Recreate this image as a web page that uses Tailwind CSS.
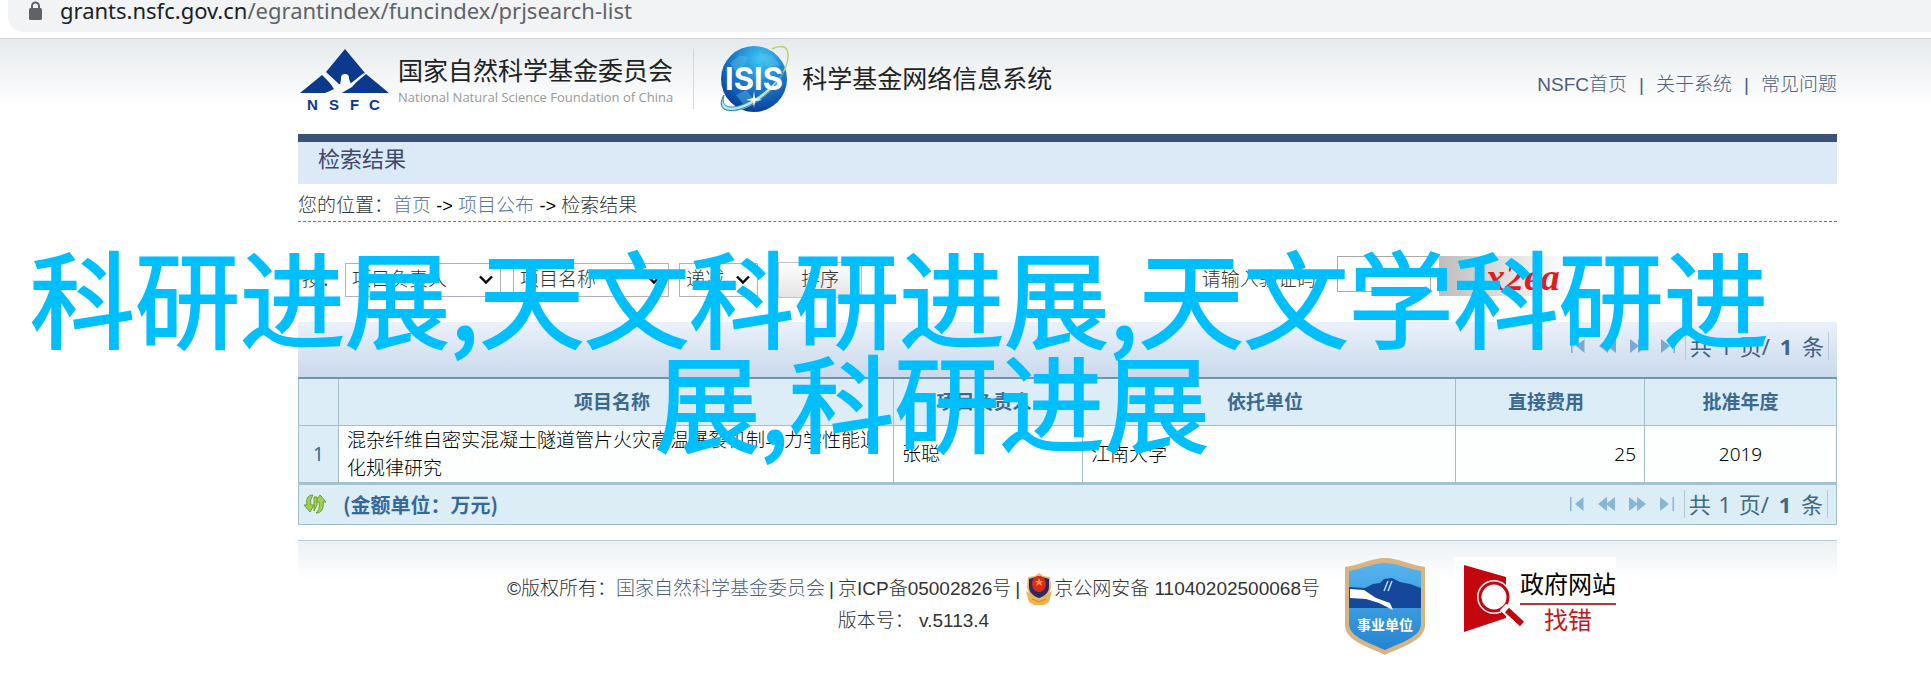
<!DOCTYPE html>
<html lang="zh-CN">
<head>
    <meta charset="UTF-8"/>
    <meta name="viewport" content="width=device-width, initial-scale=1"/>
    <title>检索结果 - 科学基金网络信息系统</title>
    <script src="https://cdn.jsdelivr.net/npm/@tailwindcss/browser@4"></script>
</head>
<body class="relative overflow-x-hidden bg-white text-[19px] leading-7 font-light text-[#333] font-['Liberation_Sans','Noto_Sans_CJK_SC',sans-serif]">
    <!-- address bar -->
    <div class="pl-2 h-[39px] bg-white border-b border-[#d3d6d9]">
        <div class="flex items-start h-8 rounded-bl-2xl bg-[#f1f3f4] pl-5">
            <svg class="w-4 h-5 mt-px" viewBox="0 0 16 20" fill="none">
                <rect x="1" y="7" width="13" height="12" rx="1.5" fill="#5f6368"/>
                <path d="M4 8V5a3.5 3.5 0 0 1 7 0v3" stroke="#5f6368" stroke-width="2"/>
            </svg>
            <div class="pl-4 text-[22px] leading-5 font-normal text-[#5f6368] font-['Noto_Sans','Open_Sans',sans-serif]"><span class="text-[#202124]">grants.nsfc.gov.cn</span>/egrantindex/funcindex/prjsearch-list</div>
        </div>
    </div>

    <div class="bg-linear-to-b from-[#e6eaed] to-white to-[68px] pl-[298px] pr-[94px]">
        <header class="flex items-center h-[95px] pb-4">
            <svg class="w-[92px] h-[66px]" viewBox="0 0 92 66">
                <path d="M47 3L67 27L61 32L53 38L51 33L47 31L43 33L42 39L28 26Z" fill="#0b3a8c"/>
                <path d="M24 29L36 41L38 43L27 47H2Z" fill="#0b3a8c"/>
                <path d="M68 28L91 47H42L55 39Z" fill="#0b3a8c"/>
                <path d="M26 28L38 38L43 38L47 34L52 38L67 26L54 41L42 48H26L36 43Z" fill="#fff"/>
                <circle cx="47" cy="32" r="4" fill="#fff"/>
                <text x="9" y="64" class="font-['Liberation_Sans',sans-serif] font-bold text-[15px]" fill="#0b3a8c">N</text>
                <text x="31" y="64" class="font-['Liberation_Sans',sans-serif] font-bold text-[15px]" fill="#0b3a8c">S</text>
                <text x="52" y="64" class="font-['Liberation_Sans',sans-serif] font-bold text-[15px]" fill="#0b3a8c">F</text>
                <text x="71" y="64" class="font-['Liberation_Sans',sans-serif] font-bold text-[15px]" fill="#0b3a8c">C</text>
            </svg>
            <div class="pl-2 pt-1">
                <div class="text-[25px] leading-8 font-normal text-[#222]">国家自然科学基金委员会</div>
                <div class="text-[13px] leading-5 font-normal text-[#999] font-['Open_Sans',sans-serif]">National Natural Science Foundation of China</div>
            </div>
            <div class="w-px h-15 ml-5 bg-[#d5d9de]"></div>
            <svg class="w-[76px] h-[76px] ml-6" viewBox="0 0 76 76">
                <defs>
                    <radialGradient id="globe" cx="60%" cy="20%" r="80%">
                        <stop offset="0" stop-color="#3fc8f4"/>
                        <stop offset="0.5" stop-color="#1b7fcf"/>
                        <stop offset="1" stop-color="#0a3f9c"/>
                    </radialGradient>
                </defs>
                <circle cx="36" cy="38" r="33" fill="url(#globe)"/>
                <path d="M12 22l10-8 8 2-3 8-10 6zM40 12l14 2 8 10-12 2zM18 54l10-5 7 8-9 7z" fill="#5fc6ee" opacity=".4"/>
                <path d="M6 54C-4 72 16 74 36 62C58 49 74 23 69 9C67 4 59 5 54 8" fill="none" stroke="#b5d36b" stroke-width="1.5"/>
                <path d="M6 54C-4 72 16 74 36 62C50 54 60 42 65 31C54 46 40 57 26 63C12 69 2 66 6 54Z" fill="#b9e4f4" stroke="#2683bd" stroke-width="1"/>
                <text x="36" y="49" text-anchor="middle" class="font-['Inter','Liberation_Sans',sans-serif] font-bold text-[31px]" fill="#fff">ISIS</text>
                <path d="M36 50l1 7 7 2-7 1-1 7-1-7-7-1 7-2z" fill="#fff"/>
            </svg>
            <div class="pl-2 text-[25px] font-normal text-[#222]">科学基金网络信息系统</div>
            <nav class="ml-auto flex gap-3 pt-3 text-[#4c5c82]">
                <a href="#">NSFC首页</a><span>|</span><a href="#">关于系统</a><span>|</span><a href="#">常见问题</a>
            </nav>
        </header>

        <h1 class="h-[50px] border-t-8 border-[#3a5178] bg-[#dce9f6] pl-5 pt-1 text-[22px] font-normal text-[#3c4a6b]">检索结果</h1>
        <div class="h-[38px] pt-2 border-b border-dashed border-[#777]">您的位置：<a href="#" class="text-[#5573a8]">首页</a> <span class="text-lg font-normal text-black">-&gt;</span> <a href="#" class="text-[#5573a8]">项目公布</a> <span class="text-lg font-normal text-black">-&gt;</span> 检索结果</div>

        <form class="flex items-center h-[100px] pt-4">
            <label for="sort1" class="w-[47px] pl-1">按：</label>
            <div class="relative w-[156px] mr-3">
                <select id="sort1" class="block appearance-none w-full h-[34px] border border-[#b5b0bd] bg-white pl-1.5"><option>项目负责人</option></select>
                <svg class="absolute right-2 top-3 w-3.5 h-2.5 pointer-events-none" viewBox="0 0 14 10" fill="none" stroke="#000" stroke-width="2.4"><path d="M1 1.5l6 6 6-6"/></svg>
            </div>
            <div class="relative w-[156px] mr-2.5">
                <select aria-label="排序字段" class="block appearance-none w-full h-[34px] border border-[#b5b0bd] bg-white pl-1.5"><option>项目名称</option></select>
                <svg class="absolute right-2 top-3 w-3.5 h-2.5 pointer-events-none" viewBox="0 0 14 10" fill="none" stroke="#000" stroke-width="2.4"><path d="M1 1.5l6 6 6-6"/></svg>
            </div>
            <div class="relative w-[79px] mr-5">
                <select aria-label="排序方式" class="block appearance-none w-full h-[34px] border border-[#b5b0bd] bg-white pl-1.5"><option>递减</option></select>
                <svg class="absolute right-2 top-3 w-3.5 h-2.5 pointer-events-none" viewBox="0 0 14 10" fill="none" stroke="#000" stroke-width="2.4"><path d="M1 1.5l6 6 6-6"/></svg>
            </div>
            <button type="button" class="w-[84px] h-9 border border-[#c0c0c0] bg-linear-to-b from-white to-[#e4e4e4]">排序</button>
            <label for="code" class="ml-auto">请输入验证码:</label>
            <input id="code" type="text" class="w-[94px] h-9 ml-4 mb-3 border border-[#aaa] bg-white"/>
            <svg class="w-[130px] h-10 ml-2 mb-2 mr-[268px] overflow-visible" viewBox="0 0 130 40">
                <defs><linearGradient id="captcha"><stop offset="0" stop-color="#bdbdbd"/><stop offset="1" stop-color="#fff"/></linearGradient></defs>
                <rect width="130" height="40" fill="url(#captcha)"/>
                <text x="47" y="34" fill="#e01b22" class="font-['Liberation_Serif',serif] italic font-bold text-[38px]">x2ea</text>
            </svg>
        </form>

        <div class="flex items-center justify-end h-[55px] bg-linear-to-b from-[#ebf1fb] to-[#c9d9ec] pr-2 pb-2">
            <div class="flex items-center gap-3.5 text-[#7ba9d2]">
                <svg class="w-3.5 h-3.5" viewBox="0 0 14 14" fill="currentColor"><path d="M0 0h1.500v14H0zM13.500 0v14L5 7z"/></svg>
                <svg class="w-[17px] h-3.5" viewBox="0 0 17 14" fill="currentColor"><path d="M9 0v14L0 7zM17 0v14L8 7z"/></svg>
                <svg class="w-[17px] h-3.5" viewBox="0 0 17 14" fill="currentColor"><path d="M0 0v14l9-7zM8 0v14l9-7z"/></svg>
                <svg class="w-3.5 h-3.5" viewBox="0 0 14 14" fill="currentColor"><path d="M12.500 0H14v14h-1.500zM0 0v14l9-7z"/></svg>
            </div>
            <div class="ml-2.5 px-1 border-x border-[#b9c8dc] text-[22px] font-normal whitespace-pre text-[#3f6385] font-['Noto_Sans','Noto_Sans_CJK_SC',sans-serif]">共 <span class="px-0.5">1</span> 页/ <b class="px-1 font-bold">1</b> 条</div>
        </div>

        <table class="w-full table-fixed border-collapse border border-[#a3bdcb] text-black font-['Noto_Sans','Noto_Sans_CJK_SC',sans-serif]">
            <colgroup>
                <col class="w-10"/><col/><col class="w-[189px]"/><col class="w-[373px]"/><col class="w-[189px]"/><col class="w-[192px]"/>
            </colgroup>
            <thead>
                <tr class="h-[47px] border-t-2 border-t-[#7395ac] bg-[#dcedf7] text-[#3a6a92]">
                    <th class="border-r border-[#a3bdcb]"></th>
                    <th class="border-r border-[#a3bdcb] pr-2">项目名称</th>
                    <th class="border-r border-[#a3bdcb] pr-2">项目负责人</th>
                    <th class="border-r border-[#a3bdcb] pr-2">依托单位</th>
                    <th class="border-r border-[#a3bdcb] pr-2">直接费用</th>
                    <th>批准年度</th>
                </tr>
            </thead>
            <tbody>
                <tr class="h-14 border-t border-[#a3bdcb] bg-[#fcfffe]">
                    <td class="border-r border-[#a3bdcb] bg-[#dcedf7] text-center text-[#3a6a92] font-normal">1</td>
                    <td class="border-r border-[#a3bdcb] pl-2">混杂纤维自密实混凝土隧道管片火灾高温爆裂机制与力学性能退化规律研究</td>
                    <td class="border-r border-[#a3bdcb] pl-2">张聪</td>
                    <td class="border-r border-[#a3bdcb] pl-2">江南大学</td>
                    <td class="border-r border-[#a3bdcb] pr-2 text-right">25</td>
                    <td class="text-center">2019</td>
                </tr>
            </tbody>
        </table>
        <div class="flex items-center h-[42px] border border-t-2 border-[#a3bdcb] border-t-[#9fc6ce] bg-[#dcedf5] pl-1 pr-2">
            <svg class="w-6 h-5" viewBox="0 0 24 20" fill="#a5cf4f" stroke="#6d9a3a" stroke-width="1">
                <path d="M10 1C4 1 3 6 4 11H1l6 7 4-7H8c-1-4 0-7 2-10z"/>
                <path d="M13 19c6 0 8-5 7-11h3l-6-7-5 7h4c1 5 0 8-3 11z"/>
                <path d="M11 3h3v8l-3 6z"/>
            </svg>
            <b class="pl-4 pt-0.5 text-xl font-bold text-[#35699a] font-['Noto_Sans_CJK_SC',sans-serif]">(金额单位：万元)</b>
            <div class="ml-auto flex items-center gap-3.5 text-[#86b5d8]">
                <svg class="w-3.5 h-3.5" viewBox="0 0 14 14" fill="currentColor"><path d="M0 0h1.500v14H0zM13.500 0v14L5 7z"/></svg>
                <svg class="w-[17px] h-3.5" viewBox="0 0 17 14" fill="currentColor"><path d="M9 0v14L0 7zM17 0v14L8 7z"/></svg>
                <svg class="w-[17px] h-3.5" viewBox="0 0 17 14" fill="currentColor"><path d="M0 0v14l9-7zM8 0v14l9-7z"/></svg>
                <svg class="w-3.5 h-3.5" viewBox="0 0 14 14" fill="currentColor"><path d="M12.500 0H14v14h-1.500zM0 0v14l9-7z"/></svg>
            </div>
            <div class="ml-2.5 px-1 border-x border-[#b3cbd6] text-[22px] font-normal whitespace-pre text-[#3f6b85] font-['Noto_Sans','Noto_Sans_CJK_SC',sans-serif]">共 <span class="px-0.5">1</span> 页/ <b class="px-1 font-bold">1</b> 条</div>
        </div>

        <footer class="flex justify-center mt-[15px] h-[142px] border-t border-[#b5cdd6] bg-linear-to-b from-[#edf1f4] to-white to-[40px] pt-4 pr-3">
            <div class="pt-4 text-center leading-8">
                <div class="flex items-center">©版权所有：<a href="#" class="text-[#4c5c82]">国家自然科学基金委员会</a><span class="px-1">|</span>京ICP备05002826号<span class="px-1">|</span>
                    <svg class="w-[30px] h-8" viewBox="0 0 30 32">
                        <path d="M2 18l6 4 7 3 7-3 6-4-3 11-5 3H10l-5-3z" fill="#f0b44c"/>
                        <path d="M15 0l4 3 7 1 1 10-2 8-10 6-10-6-2-8 1-10 7-1z" fill="#e8b56a"/>
                        <path d="M15 3l10 3v8c0 5-4 9-10 11C9 23 5 19 5 14V6z" fill="#2c2a5e"/>
                        <ellipse cx="15" cy="11" rx="7" ry="8" fill="#dd2a1b"/>
                        <path d="M15 5l1 3h3l-2 2 1 3-3-2-3 2 1-3-2-2h3z" fill="#f7a13d"/>
                        <path d="M8 26l7 3 7-3" fill="none" stroke="#c98a2b"/>
                    </svg>京公网安备 11040202500068号</div>
                <div>版本号： v.5113.4</div>
            </div>
            <svg class="w-[82px] h-[99px] ml-6" viewBox="0 0 82 99">
                <defs>
                    <linearGradient id="shield" x2="0" y2="1"><stop offset="0" stop-color="#55b4ee"/><stop offset="1" stop-color="#2484d0"/></linearGradient>
                </defs>
                <path d="M1 10C16 8 28 1 41 1S66 8 81 10V68C81 84 57 90 41 98C25 90 1 84 1 68Z" fill="#d9b382"/>
                <path d="M5 14C18 12 30 6 41 6S64 12 77 14V67C77 80 56 86 41 93C26 86 5 80 5 67Z" fill="url(#shield)"/>
                <path d="M5 30l16 1 8-4 7-1 4-4 8-1 8 4 10 2 11 4v20H5z" fill="#15489b"/>
                <path d="M6 32l14 1 12 8 14 5 3 7-14-7-13-4-16-1z" fill="#fff"/>
                <path d="M44 24l-4 10M48 24l-4 10" stroke="#b9dcf3" stroke-width="1.500"/>
                <text x="41" y="73" text-anchor="middle" fill="#fff" class="font-['Noto_Sans_CJK_SC',sans-serif] font-bold text-[14px]">事业单位</text>
            </svg>
            <div class="flex ml-7 h-[90px] bg-white pl-2.5 pt-2">
                <svg class="w-15 h-[68px]" viewBox="0 0 60 68" fill="none">
                    <path d="M0 0L42 12V53L0 67Z" fill="#c4060e"/>
                    <circle cx="30" cy="32" r="17" fill="#fff"/>
                    <circle cx="30" cy="32" r="14" stroke="#c4060e" stroke-width="3"/>
                    <path d="M39 42l20 19" stroke="#fff" stroke-width="9"/>
                    <path d="M43 45l15 14" stroke="#c4060e" stroke-width="6"/>
                </svg>
                <div class="-ml-1 pt-1.5 text-center font-normal text-[24px]">
                    <div class="border-b-2 border-[#b5333a] pb-1 text-black leading-7">政府网站</div>
                    <div class="pt-0.5 text-[#c4161c] leading-7">找错</div>
                </div>
            </div>
        </footer>
    </div>

    <!-- caption laid over the page -->
    <div class="absolute left-[30px] top-[242px] text-[105px] leading-[104px] font-normal text-[#00bfff] [-webkit-text-stroke:2px_#00bfff] whitespace-nowrap pointer-events-none font-['Noto_Sans_CJK_SC',sans-serif]">
        <div>科研进展,天文科研进展,天文学科研进</div>
        <div class="pl-[625px]">展,科研进展</div>
    </div>
</body>
</html>
